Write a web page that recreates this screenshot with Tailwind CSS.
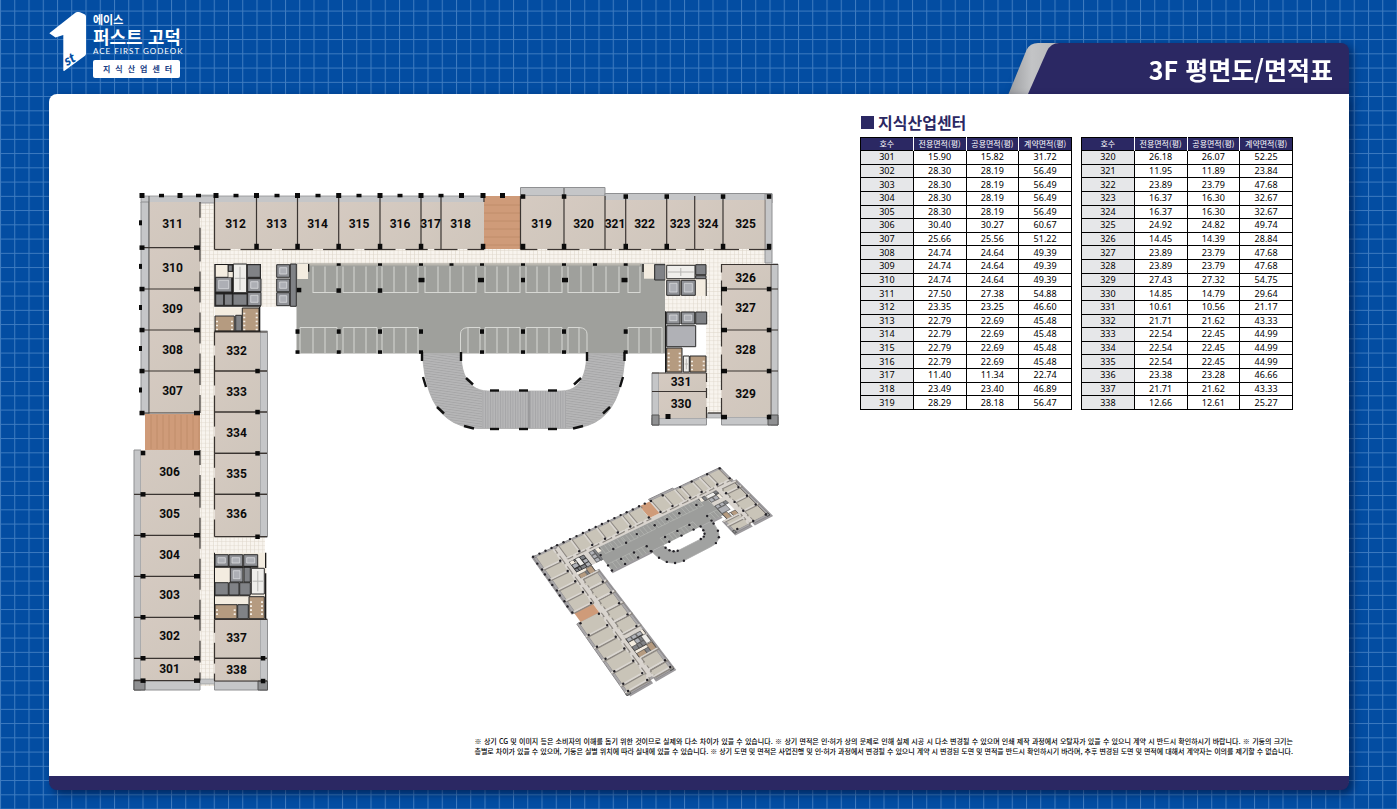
<!DOCTYPE html>
<html lang="ko">
<head>
<meta charset="utf-8">
<meta name="viewport" content="width=device-width, initial-scale=1">
<title>에이스 퍼스트 고덕 - 3F 평면도/면적표</title>
<script src="https://cdn.jsdelivr.net/npm/@tailwindcss/browser@4"></script>
</head>
<body class="relative min-h-screen bg-[#034da2] font-['Noto_Sans','Noto_Sans_CJK_KR',sans-serif] text-black">
<svg class="absolute inset-0 h-full w-full" aria-hidden="true">
  <defs>
    <pattern id="grid" width="14.25" height="14.25" y="10.6" patternUnits="userSpaceOnUse">
      <path d="M0 .5H14.25M.5 0V14.25" stroke="#3f7cc0" stroke-width="1" fill="none"/>
    </pattern>
  </defs>
  <rect width="100%" height="100%" fill="url(#grid)"/>
</svg>

<div class="relative flex min-h-screen flex-col pr-[48px] pb-[19px] pl-[49px]">
  <header class="flex h-[94px] items-end justify-between">
    <a href="#" class="flex gap-[6px] self-start pt-[12px] text-white" aria-label="에이스 퍼스트 고덕 지식산업센터">
      <svg class="h-[62px] w-[38px]" viewBox="49 12 38 62" aria-hidden="true">
        <path d="M49.3 33.2 L75 13 Q77.500 11.300 80 12.300 L84.500 14.200 Q86 15 86 16.500 V53.500 Q86 55 85 55.800 L64.500 70.800 Q63.300 71.500 63.300 70 V35 L55.500 37.500 Z" fill="#fff"/>
        <text x="67" y="66" transform="rotate(-28 67 66)" font-family="Lato" font-style="italic" font-weight="900" font-size="14" fill="#034da2">st</text>
      </svg>
      <span class="flex flex-col font-['Noto_Sans_CJK_KR',sans-serif]">
        <span class="text-[11px] leading-[14px] font-bold">에이스</span>
        <span class="text-[18px] leading-[20px] font-bold whitespace-nowrap">퍼스트 고덕</span>
        <span class="mt-px font-['Lato',sans-serif] text-[8px] leading-[8px] tracking-[1px] whitespace-nowrap">ACE FIRST GODEOK</span>
        <span class="mt-[5px] h-[18px] w-[87px] rounded-[2px] bg-white pl-[10px] text-[8px] leading-[18px] font-bold tracking-[5px] whitespace-nowrap text-[#1c3f86]">지식산업센터</span>
      </span>
    </a>
    <div class="flex h-[51px] drop-shadow-[4px_3px_4px_rgba(0,20,60,0.55)]">
      <svg class="h-[51px] w-[52px]" viewBox="1006 43 52 51" aria-hidden="true">
        <defs><linearGradient id="fold" x1="0" x2="1"><stop offset="0" stop-color="#9b9da0"/><stop offset=".45" stop-color="#c3c4c6"/><stop offset="1" stop-color="#b5b6b9"/></linearGradient></defs>
        <path d="M1006.500 94 L1024.500 50 Q1028 43 1036 43 H1058 V94Z" fill="url(#fold)"/>
        <path d="M1026 94 L1045 51 Q1049 43 1057 43 H1058 V94Z" fill="#2b2863"/>
      </svg>
      <h1 class="-ml-px flex items-center rounded-tr-[8px] bg-[#2b2863] pr-4 pl-[90px] font-['Noto_Sans_CJK_KR',sans-serif] text-[25px] leading-[48px] font-bold whitespace-nowrap text-white">3F 평면도/면적표</h1>
    </div>
  </header>

  <main class="relative flex flex-1 flex-col rounded-tl-[8px] rounded-b-[8px] border-b-[14px] border-[#2b2863] bg-white pr-[56px] shadow-[4px_4px_9px_rgba(0,15,50,0.6)]">
    <div class="flex flex-1 justify-between">
      <svg id="plan" class="mt-[86px] ml-[76px] h-[525px] w-[665px] shrink-0" viewBox="125 180 665 525" role="img" aria-label="3층 평면도">
        <defs>
          <pattern id="tile" width="4.100" height="4.100" patternUnits="userSpaceOnUse">
            <rect width="4.100" height="4.100" fill="#f8f4ee"/><path d="M0 0H4.100M0 0V4.100" stroke="#ddd5c9" stroke-width="1"/>
          </pattern>
          <pattern id="ramp" width="2.500" height="4" patternUnits="userSpaceOnUse">
            <rect width="2.500" height="4" fill="#b6b6b7"/><path d="M.5 0V4" stroke="#a1a1a3" stroke-width=".8"/>
          </pattern>
          <pattern id="rampSide" width="4" height="2.500" patternUnits="userSpaceOnUse" patternTransform="rotate(8)">
            <rect width="4" height="2.500" fill="#b6b6b7"/><path d="M0 .5H4" stroke="#a2a2a4" stroke-width=".8"/>
          </pattern>
          <linearGradient id="room" x1="0" x2="1" y1="0" y2="1"><stop offset="0" stop-color="#d5cac1"/><stop offset="1" stop-color="#cfc6bc"/></linearGradient>
        </defs>
      </svg>
      <section class="pt-[18px]">
        <h2 class="flex items-center gap-1 font-['Noto_Sans_CJK_KR',sans-serif] text-[16px] leading-[20px] font-bold text-[#2b2863]"><span class="ml-px size-[13px] bg-[#2b2863]"></span>지식산업센터</h2>
        <div id="tables" class="mt-[5px] flex gap-[9px]"></div>
      </section>
    </div>
    <p class="mb-[20px] self-end font-['Noto_Sans_CJK_KR',sans-serif] text-[7px] leading-[10px] font-medium whitespace-nowrap [text-align-last:justify]">※ 상기 CG 및 이미지 등은 소비자의 이해를 돕기 위한 것이므로 실제와 다소 차이가 있을 수 있습니다. ※ 상기 면적은 인·허가 상의 문제로 인해 실제 시공 시 다소 변경될 수 있으며 인쇄 제작 과정에서 오탈자가 있을 수 있으니 계약 시 반드시 확인하시기 바랍니다. ※ 기둥의 크기는<br>층별로 차이가 있을 수 있으며, 기둥은 실별 위치에 따라 실내에 있을 수 있습니다. ※ 상기 도면 및 면적은 사업진행 및 인·허가 과정에서 변경될 수 있으니 계약 시 변경된 도면 및 면적을 반드시 확인하시기 바라며, 추후 변경된 도면 및 면적에 대해서 계약자는 이의를 제기할 수 없습니다.</p>
  </main>
</div>

<script>
/* Area tables: unit, exclusive, common, contract */
const areas = `301 15.90 15.82 31.72|302 28.30 28.19 56.49|303 28.30 28.19 56.49|304 28.30 28.19 56.49|305 28.30 28.19 56.49|306 30.40 30.27 60.67|307 25.66 25.56 51.22|308 24.74 24.64 49.39|309 24.74 24.64 49.39|310 24.74 24.64 49.39|311 27.50 27.38 54.88|312 23.35 23.25 46.60|313 22.79 22.69 45.48|314 22.79 22.69 45.48|315 22.79 22.69 45.48|316 22.79 22.69 45.48|317 11.40 11.34 22.74|318 23.49 23.40 46.89|319 28.29 28.18 56.47|320 26.18 26.07 52.25|321 11.95 11.89 23.84|322 23.89 23.79 47.68|323 16.37 16.30 32.67|324 16.37 16.30 32.67|325 24.92 24.82 49.74|326 14.45 14.39 28.84|327 23.89 23.79 47.68|328 23.89 23.79 47.68|329 27.43 27.32 54.75|330 14.85 14.79 29.64|331 10.61 10.56 21.17|332 21.71 21.62 43.33|333 22.54 22.45 44.99|334 22.54 22.45 44.99|335 22.54 22.45 44.99|336 23.38 23.28 46.66|337 21.71 21.62 43.33|338 12.66 12.61 25.27`.split('|').map(r => r.split(' '));
const table = rows => `<table class="h-[273px] w-[212px] table-fixed border-collapse border border-black text-center text-[9px] leading-[12px] font-normal">
<thead><tr class="bg-[#2b2863] text-white">${['호수','전용면적(평)','공용면적(평)','계약면적(평)'].map(h => `<th scope="col" class="border-r border-white p-0 font-['Noto_Sans_CJK_KR',sans-serif] text-[8px] font-normal whitespace-nowrap last:border-black">${h}</th>`).join('')}</tr></thead>
<tbody>${rows.map(r => `<tr><th scope="row" class="border border-black bg-[#e6e7e9] p-0 font-normal">${r[0]}</th>${r.slice(1).map(v => `<td class="border border-black p-0">${v}</td>`).join('')}</tr>`).join('')}</tbody></table>`;
document.getElementById('tables').innerHTML = table(areas.slice(0, 19)) + table(areas.slice(19));

/* Projective map from four plan points to four points of the bird's-eye view */
function homography(s, d) {
  const m = [];
  s.forEach(([x, y], i) => {
    const [u, v] = d[i];
    m.push([x, y, 1, 0, 0, 0, -u * x, -u * y, u], [0, 0, 0, x, y, 1, -v * x, -v * y, v]);
  });
  for (let c = 0; c < 8; c++) {
    let p = c;
    for (let r = c; r < 8; r++) if (Math.abs(m[r][c]) > Math.abs(m[p][c])) p = r;
    [m[c], m[p]] = [m[p], m[c]];
    for (let r = 0; r < 8; r++) if (r !== c) {
      const f = m[r][c] / m[c][c];
      for (let k = c; k < 9; k++) m[r][k] -= f * m[c][k];
    }
  }
  const h = m.map((r, i) => r[8] / r[i]);
  return (x, y) => { const w = h[6] * x + h[7] * y + 1; return [(h[0] * x + h[1] * y + h[2]) / w, (h[3] * x + h[4] * y + h[5]) / w]; };
}

function drawFloor(P, flat) {
  /* layers from bottom to top: floors, wall shadows, walls, columns and labels */
  const out = [], shades = [], walls = [], tops = [];
  const pts = a => a.map(([x, y]) => P(x, y).map(n => n.toFixed(1)).join(',')).join(' ');
  const polyTag = (a, fill, stroke = 'none', w = 1) => `<polygon points="${pts(a)}" fill="${fill}" stroke="${stroke}" stroke-width="${w}"/>`;
  const lineTag = (x1, y1, x2, y2, c, w = 1) => `<polyline points="${pts([[x1, y1], [x2, y2]])}" stroke="${c}" stroke-width="${w}" fill="none"/>`;
  const poly = (...a) => out.push(polyTag(...a));
  const box = (x1, y1, x2, y2) => [[x1, y1], [x2, y1], [x2, y2], [x1, y2]];
  const R = (x1, y1, x2, y2, fill, stroke, w) => poly(box(x1, y1, x2, y2), fill, stroke, w);
  const L = (...a) => out.push(lineTag(...a));
  const W = (x1, y1, x2, y2) => {
    if (flat) return walls.push(lineTag(x1, y1, x2, y2, '#3a3431', 1.2));
    shades.push(lineTag(x1 + 3, y1 + 4, x2 + 3, y2 + 4, '#8e8983', 1.6));
    walls.push(lineTag(x1, y1, x2, y2, '#dad6d1', 1.6));
  };
  const C = (x, y, w = 5, h = 5) => {
    if (flat) return tops.push(polyTag(box(x - w / 2, y - h / 2, x + w / 2, y + h / 2), '#0b0b0b'));
    const [u, v] = P(x, y);
    tops.push(`<circle cx="${u.toFixed(1)}" cy="${v.toFixed(1)}" r="1.200" fill="#222026"/>`);
  };
  const tile = flat ? 'url(#tile)' : '#d9d4ce', room = flat ? 'url(#room)' : '#c9c4b8';
  const strip = flat ? '#c5c6c8' : '#a9a7a9', edge = flat ? '#8f9092' : '#8c8a8c', car = flat ? '#9fa09c' : '#9c9d9b', wood = '#cf9b79';
  const label = (x, y, t) => flat && tops.push(`<text x="${x}" y="${y + 4.5}" text-anchor="middle">${t}</text>`);

  /* raised outer edge of the bird's-eye model */
  if (!flat) [[141,450,202,694],[214,331,269,694],[296,350,424,358],[622,350,656,358],[651,373,708,430],[720,263,781,430],[139,196,149,416]].forEach(a => R(...a, '#a5a3a6', '#9c9a9d', 1.5));

  /* corridors */
  R(200, 249, 770, 264, tile); R(200, 202, 214.5, 686, tile); R(706, 263, 722, 418, tile);
  R(214.5, 536, 265, 553, tile); R(261, 263, 277, 307, tile); R(665, 296, 710, 312, tile);
  R(200, 195, 216, 202, strip, edge, .6); R(200, 679, 215, 684, strip, edge, .6); R(707, 413, 722, 418, strip, edge, .6);

  /* parking deck */
  R(296.5, 263.5, 665, 353.5, car);
  if (flat) L(300, 264.5, 640, 264.5, '#b9b6ae', 2);
  const stalls = (xs, y1, y2, base) => { xs.forEach(x => L(x, y1, x, y2, '#d7d8d4', flat ? 1 : .3)); L(xs[0], base, xs[xs.length - 1], base, '#d7d8d4', flat ? 1 : .3); };
  [[313,325,337],[343,354,366,377],[382,394,406,418],[425,438,450,463,476],[485,497,508,520],[526,537,549,562],[568,581,593,606,619],[628,640]].forEach(g => stalls(g, 266.5, 293, 292.5));
  [[300,313,325,337],[343,354,366,377],[382,394,406,418],[468,480],[485,497,508,520],[526,537,549,562],[568,579],[628,639,651,662]].forEach(g => stalls(g, 327.5, 353, 327.5));
  if (flat) out.push('<path d="M460.500 353V334Q460.500 328 468 327.500M587 353V334Q587 328 579 327.500" fill="none" stroke="#d7d8d4"/>');

  /* ramp loop */
  const bez = (a, b, c, d) => Array.from({ length: 13 }, (_, i) => { const t = i / 12, s = 1 - t; return [0, 1].map(k => s*s*s*a[k] + 3*s*s*t*b[k] + 3*s*t*t*c[k] + t*t*t*d[k]); });
  const outerL = bez([422.5,353.5],[425,398],[440,427],[478,428.5]), outerR = bez([570,428.5],[609,427],[623,398],[625,353.5]);
  const innerR = bez([587,353.5],[586,376],[580,391],[561,391]), innerL = bez([488,391],[470,391],[461,376],[461,353.5]);
  poly([...outerL, ...outerR, ...innerR, ...innerL], flat ? 'url(#rampSide)' : '#a1a2a1', '#a9a9aa', .8);
  if (flat) {
    R(482, 391, 566, 428, 'url(#ramp)'); L(529, 391, 529, 428, '#8a8a8c', 1.2);
    L(422.5, 354, 461, 354, '#b0b0b0'); L(587, 354, 625, 354, '#b0b0b0');
    [[422,352,422,361],[461,352,461,361],[587,352,587,361],[624.5,352,624.5,361],[423,377,426,387],[623,377,620,387],[437,407,444,413.500],[610,407,603,413.500],[464,426,474,428.500],[583,426,573,428.500],[490,429,499,429],[519,429,528,429],[548,429,557,429],[490,390.500,499,390.500],[519,390.500,528,390.500],[548,390.500,557,390.500],[466,378,473,384.500],[581,378,574,384.500]].forEach(a => L(...a, '#111', 2.4));
  } else [...outerL, ...outerR, ...innerL, ...innerR].forEach((p, i) => i % 3 || C(...p));

  /* top wing */
  R(141, 196, 484, 203, strip, edge, .8); R(520.5, 187.500, 605, 196, strip, edge, 1); R(605, 193.500, 772, 203, strip, edge, 1); R(765, 194, 772, 263, strip, edge, 1);
  L(564, 188, 564, 196, '#555'); R(484, 196, 520.5, 249, wood);
  if (flat) for (let y = 205; y < 249; y += 8) L(484, y, 520, y, '#bd8b68', .8);
  const top = [[214.5,256.5,312],[256.5,297.5,313],[297.5,338.7,314],[338.7,380,315],[380,421,316],[421,441,317],[441,484,318],[520.5,564,319],[564,605,320],[605,625.7,321],[625.7,666.7,322],[666.7,694.7,323],[694.7,723,324],[723,765,325]];
  const lx = {312:235.500,313:276.500,314:317.500,315:359,316:400,317:430.500,318:460.500,319:541.500,320:583.500,321:615,322:644.500,323:680,324:708,325:745.500};
  top.forEach(([a, b, n]) => {
    R(a, n < 319 ? 202 : n < 321 ? 196 : 200, b, 249, room);
    W(a, 196, a, 249.5); if (n === 318) W(b, 196, b, 202);
    const g = Math.min(5, (b - a) / 6), m = (a + b) / 2;
    W(a, 249.5, m - g, 249.5); W(m + g, 249.5, b, 249.5);
    label(lx[n], 223.5, n);
  });
  W(765, 249.5, 771, 249.5); L(765, 200, 765, 249, '#8d8580', 1);
  [142,161.5,180,198.5,216,236,256.5,277,297.5,318,338.7,359,380,400,421,441,461.5,483,502.5].forEach((x, i) => C(x, 195.5, 5, i % 2 && x < 483 ? 3.500 : 5));
  [523,564,625.7,666.7,723,769].forEach(x => C(x, 196.5, 4.500, 4.500));
  [256.5,297.5,338.7,380,421,483,523,564,625.7,666.7,723,769].forEach(x => C(x, 246.5, 4.500, 5.500));

  /* left wing */
  R(141, 202, 149, 414, strip, edge, 1); R(134, 450, 141, 690, strip, edge, 1); R(134, 680, 200, 690, strip, edge, 1);
  R(145, 414, 200, 450, wood);
  if (flat) for (let x = 151; x < 200; x += 6) L(x, 415, x, 449, '#bd8b68', .8);
  [[202,247.7,311,223.500],[247.7,289,310,267.500],[289,330,309,308.500],[330,371,308,349.500],[371,413,307,390.500],[450,494.3,306,471.500],[494.3,535.3,305,513.500],[535.3,576.3,304,554.500],[576.3,617.3,303,594.500],[617.3,658.3,302,635.500],[658.3,680.6,301,668.500]].forEach(([a, b, n, y]) => {
    const x = n > 306 ? 149 : 141, m = (a + b) / 2 - 2;
    R(x, a, 200, b, room);
    W(x - 7, b, 200, b);
    W(200, a, 200, m - 5); W(200, m + 5, 200, b);
    label(n > 306 ? 172.500 : 169.500, y, n);
    C(x === 149 ? 142 : 143, b, 5, 4.500); C(197, b, 6, 4.500);
    if (x === 149) C(140.5, m, 3, 5);
  });
  if (flat) L(149, 196, 149, 413, '#555');
  C(143, 453, 4.500, 4.500); C(197, 453, 6, 4.500); R(134, 680, 145, 690, '#8f9092', '#555', 1);

  /* inner left wing */
  R(260, 331, 267.5, 537, strip, edge, 1); R(260, 619, 267.5, 690, strip, edge, 1); R(214.5, 681, 267.5, 690, strip, edge, 1);
  [[332,371,332,350.500],[371,412,333,391.500],[412,453.3,334,432.500],[453.3,494.3,335,473.500],[494.3,536.7,336,513.500],[619.3,658.3,337,637.500],[658.3,681,338,669.500]].forEach(([a, b, n, y]) => {
    R(214.5, a, 260, b, room);
    const m = (a + b) / 2 - 1;
    W(214.5, a, 267, a); W(214.5, b, 267, b); W(214.5, a, 214.5, m - 5); W(214.5, m + 5, 214.5, b);
    label(236.500, y, n); C(n > 336 ? 263 : 257.500, b, 4.500, 4.500);
  });
  R(258, 681, 267.5, 690, '#8f9092', '#555', 1);

  /* right wing */
  R(771, 264, 778, 425, strip, edge, 1); R(721.5, 417, 778, 425, strip, edge, 1); R(652, 373, 659, 425, strip, edge, 1); R(652, 418, 706.5, 425, strip, edge, 1);
  [[264,289,326,277],[289,330,327,307.500],[330,371,328,349.500],[371,417,329,393.500]].forEach(([a, b, n, y]) => {
    R(721.5, a, 771, b, room); if (n !== 326) W(721.5, a, 778, a);
    const m = (a + b) / 2;
    W(721.5, a, 721.5, m - 4); W(721.5, m + 4, 721.5, b); L(771, a, 771, b, '#77716d', 1);
    label(745.500, y, n); C(724, b, 6, 4.500); C(769, b, 4.500, 4.500);
  });
  W(721.5, 264.500, 778, 264.500);
  R(659, 373, 706.5, 391.500, room); R(659, 391.500, 706.5, 418, room);
  W(652, 373, 706.5, 373); W(652, 391.500, 706.5, 391.500); W(706.5, 373, 706.5, 382); W(706.5, 388, 706.5, 398); W(706.5, 407, 706.5, 418);
  label(681, 381.500, 331); label(681, 403.500, 330); C(668, 416.500); W(708, 413, 721, 413);
  R(768, 415, 778, 425, '#8f9092', '#555', 1); R(652, 415, 659, 425, '#8f9092', '#555', 1);

  /* service cores; k: d shaft, e lift, c floor, w stair, b washroom, g void, k wall */
  const core = (ox, oy, list) => list.forEach(([k, a, b, c, d]) => {
    const q = n => n / 3, f = { d: '#808286', e: '#8f9196', c: '#f3ece0', w: '#efeeeb', b: '#b59b80', g: '#b0b1b6', k: '#1c1b1b' }[k];
    R(ox + q(a), oy + q(b), ox + q(c), oy + q(d), f, 'dwegb'.includes(k) ? '#2b2a2a' : 'none', flat ? 1 : .5);
    if (k === 'e') R(ox + q(a + 9), oy + q(b + 9), ox + q(c - 9), oy + q(d - 10), '#adafb5', '#d9dadd', flat ? .8 : .3);
    if (k === 'w' && flat) { L(ox + q((a + c) / 2), oy + q(b + 8), ox + q((a + c) / 2), oy + q(d - 8), '#b6b5b2', 1); L(ox + q(a + 4), oy + q((b + d) / 2), ox + q(c - 4), oy + q((b + d) / 2), '#b6b5b2', 1); }
    if (k === 'b' && flat) for (let y = b + 14; y < d - 6; y += 12) { R(ox + q(a + 3), oy + q(y), ox + q(a + 9), oy + q(y + 5), '#f3eee6'); R(ox + q(c - 10), oy + q(y), ox + q(c - 4), oy + q(y + 5), '#f3eee6'); }
  });
  core(125, 180, [['k',268,252,408,380],['c',272,255,308,292],['e',272,292,320,336],['d',310,255,322,274],['c',310,276,324,292],['w',325,252,365,338],['d',367,254,406,292],['e',368,296,408,335],['e',368,337,408,377],['d',272,342,296,376],['d',298,342,322,376],['d',324,342,366,376],['c',270,382,402,406],['b',270,408,328,453],['d',332,406,350,453],['b',352,384,402,453],['k',402,380,406,455],['k',268,452,406,456],['e',455,254,494,292],['e',455,297,494,335],['e',455,338,494,377],['d',496,252,514,379],['c',517,252,549,297],['k',549,252,553,275]]);
  core(125, 410, [['c',268,428,424,628],['e',270,434,310,469],['e',312,434,353,469],['e',356,434,398,469],['c',270,476,314,516],['e',316,473,354,516],['d',357,470,376,516],['d',270,518,310,555],['d',312,518,342,555],['d',344,518,376,555],['w',379,475,418,552],['b',270,584,336,626],['d',338,584,370,626],['b',372,560,418,626],['k',268,556,376,559],['k',268,469,400,473],['k',267,428,270,628],['k',420,428,424,474],['k',420,490,424,628]]);
  core(560, 180, [['c',252,252,282,296],['k',247,252,251,276],['d',284,254,316,300],['c',316,252,440,348],['w',320,256,405,296],['d',407,254,438,284],['d',407,287,438,296],['e',320,301,360,346],['e',364,301,406,346],['k',437,297,440,348],['e',320,396,360,432],['e',364,396,404,432],['d',407,396,440,432],['g',320,437,407,500],['b',320,504,366,576],['w',370,528,388,576],['b',390,528,438,576],['k',315,394,319,578]]);

  /* deck columns */
  [338.7,380].forEach(x => C(x, 290.5, 4.500, 4.500)); C(299, 290, 4.500, 4.500);
  [421.5,481,523,565,624.5].forEach((x, i) => C(x, 280, i === 2 ? 4 : 6, 4.500));
  [297.5,338.7,380,421,482,523,564,625.7].forEach(x => { C(x, 331.5, 4, 4.500); C(x, 352, 4, 3.500); });
  if (flat) [338.7,380,421,451.500,482,523,564,595,625.7].forEach(x => C(x, 264.5, 4, 2.500));
  return [...out, ...shades, ...walls, ...tops].join('');
}

const view = homography([[141,195],[772,194],[778,425],[134,690]], [[532.7,556.7],[720,467.5],[770,515],[627,695.7]]);
document.getElementById('plan').insertAdjacentHTML('beforeend',
  `<g font-family="'Liberation Sans Narrow', Roboto, sans-serif" font-weight="700" font-size="12" fill="#0b0b0b">${drawFloor((x, y) => [x, y], true)}</g><g>${drawFloor(view, false)}</g>`);
</script>
</body>
</html>
